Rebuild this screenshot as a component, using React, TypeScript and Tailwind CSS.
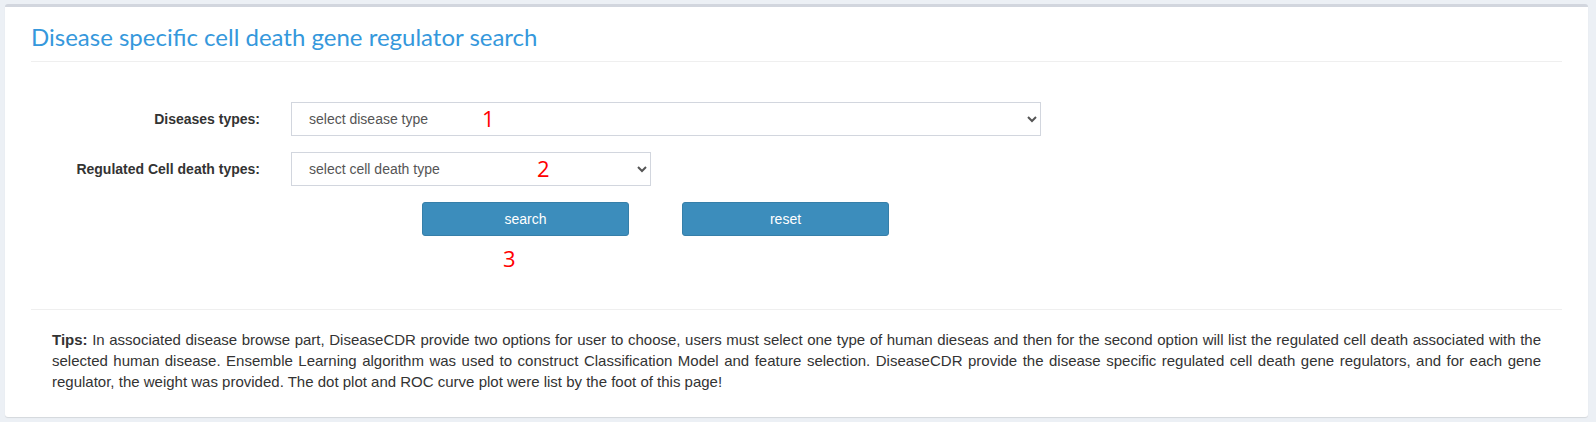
import React from 'react';

const sans = { fontFamily: '"Liberation Sans", Arial, sans-serif' };
const mark = { fontFamily: '"Open Sans", sans-serif' };

export default function App() {
  return (
    <div className="min-h-screen bg-[#ecf0f5] pt-[4px] pl-[5px] pr-[8px] pb-[9px]" style={sans}>
      <div className="relative bg-white border-t-[3px] border-[#d2d6de] rounded-[3px] shadow-[0_1px_1px_rgba(0,0,0,0.1)] px-[26px]">
        {/* header */}
        <div className="border-b border-[#efefef] pt-[16px] pb-[10px]">
          <h3
            className="text-[24px] leading-[28px] text-[#3598dc]"
            style={{ fontFamily: 'Lato, "Open Sans", sans-serif' }}
          >
            Disease specific cell death gene regulator search
          </h3>
        </div>

        {/* form */}
        <div className="pt-[40px] pb-[73px]">
          <div className="flex items-center">
            <label className="w-[229px] text-right text-[14px] font-bold text-[#333]">Diseases types:</label>
            <div className="relative ml-[31px]">
              <select className="w-[750px] h-[34px] border border-[#d2d6de] bg-white pl-[13px] text-[14px] text-[#555] outline-none">
                <option>select disease type</option>
              </select>
              <span className="absolute left-[191px] top-[2px] text-[22px] leading-[28px] text-[#ff0000] pointer-events-none" style={mark}>1</span>
            </div>
          </div>
          <div className="flex items-center mt-[16px]">
            <label className="w-[229px] text-right text-[14px] font-bold text-[#333]">Regulated Cell death types:</label>
            <div className="relative ml-[31px]">
              <select className="w-[360px] h-[34px] border border-[#d2d6de] bg-white pl-[13px] text-[14px] text-[#555] outline-none">
                <option>select cell death type</option>
              </select>
              <span className="absolute left-[246px] top-[2px] text-[22px] leading-[28px] text-[#ff0000] pointer-events-none" style={mark}>2</span>
            </div>
          </div>
          <div className="relative flex mt-[16px] ml-[391px] gap-[53px]">
            <button className="w-[207px] h-[34px] rounded-[3px] bg-[#3c8dbc] border border-[#367fa9] text-white text-[14px]">search</button>
            <button className="w-[207px] h-[34px] rounded-[3px] bg-[#3c8dbc] border border-[#367fa9] text-white text-[14px]">reset</button>
            <span className="absolute left-[81px] top-[42px] text-[22px] leading-[28px] text-[#ff0000]" style={mark}>3</span>
          </div>
        </div>

        {/* tips */}
        <div className="border-t border-[#efefef] pt-[19px] pb-[25px] px-[21px]">
          <p className="text-[15px] leading-[21px] text-[#333] text-justify">
            <span className="block [text-align-last:justify]">
              <b>Tips:</b> In associated disease browse part, DiseaseCDR provide two options for user to choose, users must select one type of human dieseas and then for the second option will list the regulated cell death associated with the
            </span>
            <span className="block [text-align-last:justify]">
              selected human disease. Ensemble Learning algorithm was used to construct Classification Model and feature selection. DiseaseCDR provide the disease specific regulated cell death gene regulators, and for each gene
            </span>
            <span className="block">
              regulator, the weight was provided. The dot plot and ROC curve plot were list by the foot of this page!
            </span>
          </p>
        </div>
      </div>
    </div>
  );
}
